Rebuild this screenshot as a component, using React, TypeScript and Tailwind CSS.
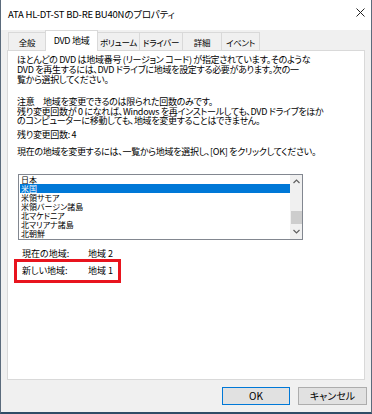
import React from "react";

const jp = "font-['Noto_Sans_CJK_JP','Noto_Sans',sans-serif] [font-feature-settings:'palt']";

const tabs = [
    { label: "全般", w: "w-[38px]" },
    { label: "DVD 地域", w: "w-[53px]", active: true },
    { label: "ボリューム", w: "w-[43px]" },
    { label: "ドライバー", w: "w-[44px]" },
    { label: "詳細", w: "w-[40px]" },
    { label: "イベント", w: "w-[39px]" },
];

const regions = ["日本", "米国", "米領サモア", "米領バージン諸島", "北マケドニア", "北マリアナ諸島", "北朝鮮"];

const Chevron = ({ up }: { up?: boolean }) => (
    <svg width="7" height="5" viewBox="0 0 7 5">
        <polyline
            points={up ? "0.5,4 3.5,1 6.5,4" : "0.5,1 3.5,4 6.5,1"}
            fill="none"
            stroke="#606060"
            strokeWidth="1.2"
        />
    </svg>
);

const Lines = ({ lines, className }: { lines: string[]; className?: string }) => (
    <div className={`ml-[9px] whitespace-nowrap text-[9px] leading-[9.8px] tracking-[-0.3px] text-black ${className ?? ""}`}>
        {lines.map((l) => (
            <div key={l}>{l}</div>
        ))}
    </div>
);

export default function App() {
    return (
        <div className={`w-[372px] h-[414px] bg-[#f0f0f0] flex flex-col border-l border-r border-[#5b6b7c] border-b-2 border-b-[#2f4c66] ${jp}`}>
            {/* title bar */}
            <div className="h-[30px] bg-white flex items-start justify-between pt-[8px] pl-[7px] pr-[6px]">
                <span className="text-[9.5px] leading-[12px] tracking-[-0.2px] text-black">ATA HL-DT-ST BD-RE BU40Nのプロパティ</span>
                <svg width="9" height="9" viewBox="0 0 9 9">
                    <path d="M0.5 0.5 L8.5 8.5 M8.5 0.5 L0.5 8.5" stroke="#222" strokeWidth="1" />
                </svg>
            </div>

            {/* tabs */}
            <div className="pt-[1px] pl-[7px] flex items-end h-[21px] -mb-[1px]">
                {tabs.map((t, i) =>
                    t.active ? (
                        <div
                            key={t.label}
                            className={`relative z-10 ${t.w} h-[21px] -ml-[1px] bg-white border border-b-0 border-[#d9d9d9] flex items-start justify-center pt-[4px] whitespace-nowrap text-[9px] leading-[11px] tracking-[-0.3px] text-black`}
                        >
                            {t.label}
                        </div>
                    ) : (
                        <div
                            key={t.label}
                            className={`${t.w} h-[19px] ${i > 0 ? "-ml-[1px]" : ""} bg-[#f0f0f0] border border-b-0 border-[#d9d9d9] flex items-start justify-center pt-[4px] whitespace-nowrap text-[8.5px] leading-[11px] tracking-[-0.3px] text-black`}
                        >
                            {t.label}
                        </div>
                    )
                )}
            </div>

            {/* panel */}
            <div className="ml-[6px] w-[358px] h-[330px] bg-white border border-[#d9d9d9] pt-[4px]">
                <Lines
                    lines={[
                        "ほとんどの DVD は地域番号 (リージョン コード) が指定されています。そのような",
                        "DVD を再生するには、DVD ドライブに地域を設定する必要があります。次の一",
                        "覧から選択してください。",
                    ]}
                />
                <Lines
                    className="mt-[12.4px]"
                    lines={[
                        "注意　地域を変更できるのは限られた回数のみです。",
                        "残り変更回数が 0 になれば、Windows を再インストールしても、DVD ドライブをほか",
                        "のコンピューターに移動しても、地域を変更することはできません。",
                    ]}
                />
                <Lines className="mt-[3.9px]" lines={["残り変更回数: 4"]} />
                <Lines className="mt-[6.9px]" lines={["現在の地域を変更するには、一覧から地域を選択し、[OK] をクリックしてください。"]} />

                {/* list box */}
                <div className="mt-[17px] ml-[10px] w-[285px] h-[66px] border border-[#828790] flex">
                    <div className="flex-1 pl-[1px]">
                        {regions.map((r, i) => (
                            <div
                                key={r}
                                className={`h-[9px] text-[8px] leading-[9px] pl-[1px] whitespace-nowrap ${
                                    i === 1 ? "bg-[#0078d7] text-white" : "text-black"
                                }`}
                            >
                                {r}
                            </div>
                        ))}
                    </div>
                    <div className="w-[12px] bg-[#f0f0f0] flex flex-col items-center">
                        <div className="h-[14px] flex items-center justify-center">
                            <Chevron up />
                        </div>
                        <div className="mt-[22px] w-[11px] h-[13px] bg-[#cdcdcd]" />
                        <div className="flex-1 flex items-center justify-center">
                            <Chevron />
                        </div>
                    </div>
                </div>

                {/* region info */}
                <div className="mt-[9px] ml-[14px] flex text-[9px] leading-[10px] text-black">
                    <span className="w-[66px]">現在の地域:</span>
                    <span>地域 2</span>
                </div>
                <div className="ml-[6px] w-[107px] h-[24px] border-[3px] border-[#e8141e] flex items-center pl-[5px] text-[9px] leading-[10px] text-black">
                    <span className="w-[66px]">新しい地域:</span>
                    <span>地域 1</span>
                </div>
            </div>

            {/* buttons */}
            <div className="mt-[7px] pr-[4px] flex justify-end gap-[8px]">
                <button className="w-[68px] h-[18px] bg-[#e1e1e1] border border-[#0078d7] text-[10px] leading-[12px] text-black">
                    OK
                </button>
                <button className="w-[69px] h-[18px] bg-[#e1e1e1] border border-[#adadad] text-[10px] leading-[12px] text-black">
                    キャンセル
                </button>
            </div>
        </div>
    );
}
